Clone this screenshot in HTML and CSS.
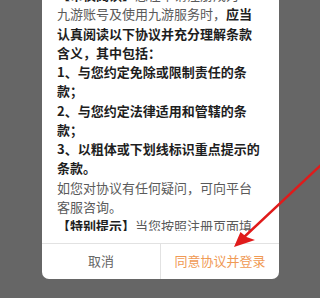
FILE: index.html
```html
<!DOCTYPE html>
<html lang="zh-CN">
<head>
<meta charset="utf-8">
<title>协议</title>
<link rel="stylesheet" href="styles.css">
</head>
<body>
<div class="screen">
  <div class="dialog">
    <div class="body">
      <div class="scroll">
        <div class="text">
          <p><b>【审慎阅读】</b>您在申请注册成为<br>九游账号及使用九游服务时，<b>应当认真阅读以下协议并充分理解条款含义，其中包括：</b></p>
          <p><b>1、与您约定免除或限制责任的条款；</b></p>
          <p><b>2、与您约定法律适用和管辖的条款；</b></p>
          <p><b>3、以粗体或下划线标识重点提示的条款。</b></p>
          <p>如您对协议有任何疑问，可向平台客服咨询。</p>
          <p><b>【特别提示】</b>当您按照注册页面填写信息、阅读并同意本协议。</p>
        </div>
      </div>
    </div>
    <div class="actions">
      <div class="btn cancel">取消</div>
      <div class="btn ok">同意协议并登录</div>
    </div>
  </div>
  <svg class="arrow" width="320" height="298" viewBox="0 0 320 298">
    <line x1="322" y1="164" x2="242" y2="239" stroke="#e01b1b" stroke-width="2.4" stroke-linecap="round"/>
    <polygon points="234,247 240.5,232 246.5,237 255,240" fill="#e01b1b"/>
  </svg>
</div>
</body>
</html>
```

FILE: styles.css
```css
* { box-sizing: border-box; }
html, body { margin: 0; padding: 0; }
body {
  width: 320px;
  height: 298px;
  overflow: hidden;
  font-family: "Noto Sans CJK SC", "Noto Sans", sans-serif;
}
.screen {
  position: relative;
  width: 320px;
  height: 298px;
  background: #666666;
  display: flex;
  flex-direction: column;
  justify-content: flex-end;
  padding: 0 41px 19px 42px;
  overflow: hidden;
}
.dialog {
  background: #ffffff;
  border-radius: 0 0 7px 7px;
  display: flex;
  flex-direction: column;
}
.body {
  padding: 0 15px 12px 15px;
  border-bottom: 1px solid #e2e2e2;
}
.scroll {
  height: 231px;
  overflow: hidden;
}
.text {
  margin-top: -15px;
  font-size: 13px;
  line-height: 19.25px;
  color: #5a5a5a;
}
.text p { margin: 0; }
.text b { font-weight: 700; color: #1e1e1e; }
.actions {
  display: flex;
  height: 35px;
}
.btn {
  flex: 1;
  display: flex;
  align-items: center;
  justify-content: center;
  font-size: 13px;
  padding-bottom: 2px;
}
.cancel { color: #666666; }
.ok {
  color: #f09a55;
  border-left: 1px solid #e2e2e2;
}
.arrow {
  position: absolute;
  left: 0;
  top: 0;
}
```
